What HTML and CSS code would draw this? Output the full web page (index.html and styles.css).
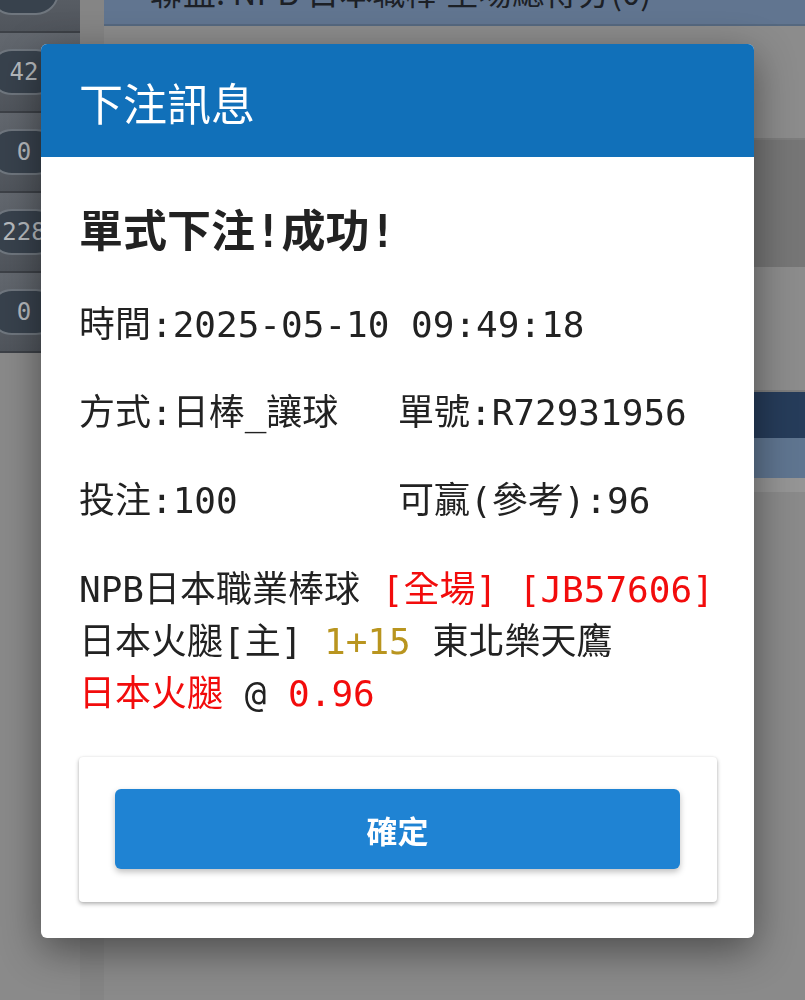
FILE: index.html
```html
<!DOCTYPE html>
<html lang="zh-Hant">
<head>
    <meta charset="UTF-8">
    <meta name="viewport" content="width=device-width, initial-scale=1.0">
    <title>下注訊息</title>
    <link rel="stylesheet" href="styles.css">
</head>
<body>

    <div class="page">
        <aside class="side">
            <div class="side-cell"><span class="pill">57</span></div>
            <div class="side-cell"><span class="pill">42</span></div>
            <div class="side-cell"><span class="pill">0</span></div>
            <div class="side-cell"><span class="pill">228</span></div>
            <div class="side-cell"><span class="pill">0</span></div>
        </aside>
        <div class="gutter"></div>
        <main class="main">
            <div class="topbar"><span>聯盟: NPB 日本職棒 全場總得分(0)</span></div>
            <div class="band band-light"></div>
            <div class="band band-dark"></div>
            <div class="band band-light tall"></div>
            <div class="band band-navy"></div>
            <div class="band band-slate"></div>
            <div class="band band-line"></div>
        </main>
    </div>

    <div class="overlay">
        <div class="dialog">
            <div class="dialog-head">
                <h1>下注訊息</h1>
            </div>
            <div class="dialog-body">
                <h2 class="result">單式下注!成功!</h2>

                <div class="info">
                    <div class="info-row full">時間:2025-05-10 09:49:18</div>
                    <div class="info-row">方式:日棒_讓球</div>
                    <div class="info-row">單號:R72931956</div>
                    <div class="info-row">投注:100</div>
                    <div class="info-row">可贏(參考):96</div>
                </div>

                <div class="detail">
                    <p>NPB日本職業棒球 <span class="red">[全場]</span> <span class="red">[JB57606]</span></p>
                    <p>日本火腿[主] <span class="gold">1+15</span> 東北樂天鷹</p>
                    <p><span class="red">日本火腿</span> @ <span class="red">0.96</span></p>
                </div>

                <div class="actions">
                    <button class="ok-btn" id="okBtn">確定</button>
                </div>
            </div>
        </div>
    </div>

</body>
</html>
```

FILE: styles.css
```css
body {
    margin: 0;
    background-color: #8a8a8a;
    font-family: "Noto Sans CJK TC", sans-serif;
    overflow: hidden;
}

/* dimmed page behind the dialog */
.page {
    display: flex;
    height: 1000px;
}

.side {
    width: 80px;
    margin-top: -47px;
    flex-shrink: 0;
}

.side-cell {
    height: 78px;
    display: flex;
    align-items: center;
    background: linear-gradient(#63686f, #50555c);
    border-bottom: 2px solid #3d4147;
}

.pill {
    margin-left: -11px;
    width: 66px;
    height: 42px;
    line-height: 42px;
    text-align: center;
    border-radius: 23px;
    background-color: #38424d;
    border: 2px solid #6f767e;
    color: #b6babe;
    font-family: "DejaVu Sans Mono", monospace;
    font-size: 24px;
}

.gutter {
    width: 24px;
    background-color: #858585;
}

.main {
    flex: 1;
}

.topbar {
    height: 24px;
    overflow: hidden;
    background-color: #617590;
    border-bottom: 2px solid #55687f;
}

.topbar span {
    display: block;
    margin: -33px 0 0 46px;
    font-size: 33px;
    color: #1c2026;
    white-space: nowrap;
}

.band {
    height: 112px;
}

.band-light {
    background-color: #8c8c8c;
    border-bottom: 2px solid #7d7d7d;
}

.band-light.tall {
    height: 123px;
}

.band-dark {
    height: 127px;
    background-color: #767676;
}

.band-navy {
    height: 46px;
    background-color: #263c5a;
}

.band-slate {
    height: 40px;
    background-color: #5f7590;
}

.band-line {
    height: 14px;
    background-color: #959595;
}

/* dialog */
.overlay {
    position: fixed;
    top: 0;
    left: 0;
    right: 0;
    bottom: 0;
    padding: 44px 0 0 41px;
}

.dialog {
    width: 713px;
    background-color: #fff;
    border-radius: 6px;
    overflow: hidden;
    box-shadow: 0 12px 40px rgba(0, 0, 0, 0.45);
}

.dialog-head {
    height: 113px;
    display: flex;
    align-items: center;
    padding: 0 38px;
    background-color: #1170b9;
}

.dialog-head h1 {
    margin: 2px 0 0;
    font-size: 44px;
    font-weight: 400;
    color: #fff;
}

.dialog-body {
    padding: 48px 37px 36px 38px;
    font-family: "DejaVu Sans Mono", "Noto Sans CJK TC", monospace;
    color: #222;
}

.result {
    margin: 0;
    font-size: 44px;
    line-height: 54px;
    font-weight: 700;
}

.info {
    display: grid;
    grid-template-columns: 1fr 1fr;
    row-gap: 36px;
    margin-top: 40px;
    font-size: 36px;
    line-height: 52px;
}

.info-row.full {
    grid-column: 1 / 3;
}

.detail {
    margin-top: 37px;
    font-size: 36px;
    line-height: 52px;
}

.detail p {
    margin: 0;
    white-space: nowrap;
}

.red {
    color: #f20c0c;
}

.gold {
    color: #b9951f;
}

.actions {
    margin-top: 37px;
    padding: 32px 37px 33px 36px;
    background-color: #fff;
    border-radius: 4px;
    box-shadow: 0 2px 4px rgba(0, 0, 0, 0.3), 0 0 2px rgba(0, 0, 0, 0.08);
}

.ok-btn {
    display: block;
    width: 100%;
    height: 80px;
    border: none;
    border-radius: 6px;
    background-color: #1f83d3;
    color: #fff;
    font-family: "Noto Sans CJK TC", sans-serif;
    font-size: 31px;
    font-weight: 700;
    box-shadow: 0 3px 6px rgba(0, 0, 0, 0.25);
    cursor: pointer;
}
```
